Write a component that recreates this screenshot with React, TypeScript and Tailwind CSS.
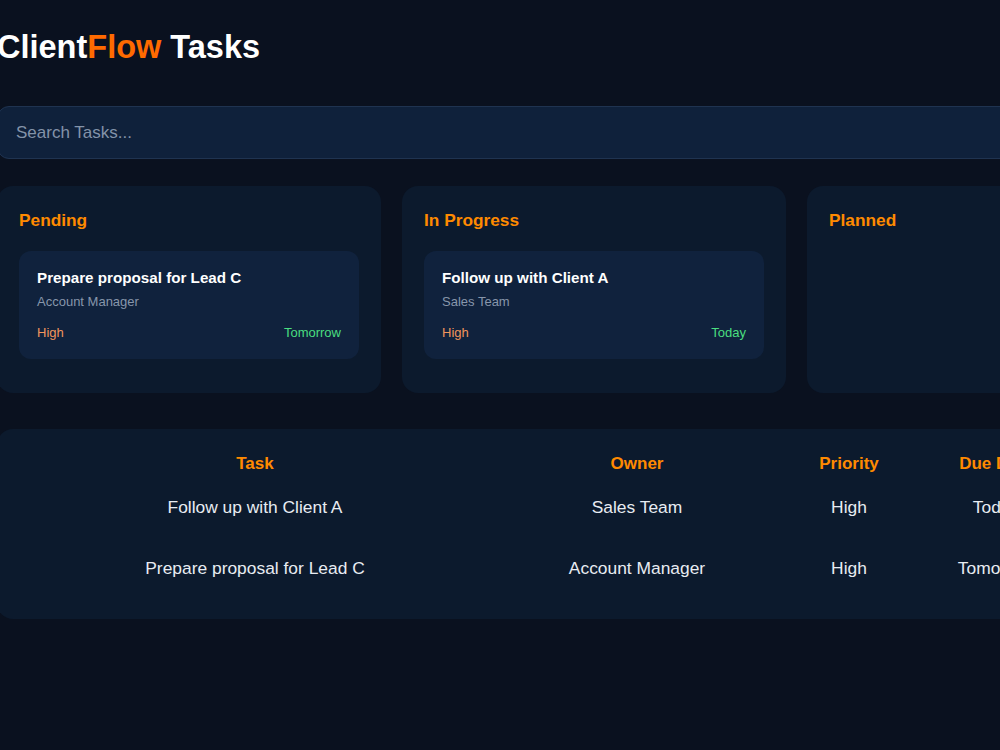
const columns = [
  {
    title: "Pending",
    tasks: [{ name: "Prepare proposal for Lead C", owner: "Account Manager", priority: "High", due: "Tomorrow" }],
  },
  {
    title: "In Progress",
    tasks: [{ name: "Follow up with Client A", owner: "Sales Team", priority: "High", due: "Today" }],
  },
  { title: "Planned", tasks: [] },
];

const rows = [
  { name: "Follow up with Client A", owner: "Sales Team", priority: "High", due: "Today" },
  { name: "Prepare proposal for Lead C", owner: "Account Manager", priority: "High", due: "Tomorrow" },
];

export default function App() {
  return (
    <div className="min-h-[750px] overflow-hidden bg-[#0a111f] font-['Liberation_Sans',Arial,sans-serif]">
      <div className="-ml-[3px] w-[1194px] pt-[29px]">
        <h1 className="text-[32.5px] font-bold leading-[37px] text-white">
          Client<span className="text-[#ff6a00]">Flow</span> Tasks
        </h1>

        <input
          placeholder="Search Tasks..."
          className="mt-[40px] block h-[53px] w-full rounded-xl border border-[#1f3350] bg-[#0f213b] px-[18px] text-[17px] text-white outline-none placeholder:text-[#8393a9]"
        />

        <div className="mt-[27px] grid grid-cols-3 gap-[21px]">
          {columns.map((col) => (
            <section key={col.title} className="h-[207px] rounded-2xl bg-[#0c1a2d] p-[22px]">
              <h3 className="text-[17.3px] font-bold leading-[24px] text-[#ff8a00]">{col.title}</h3>
              {col.tasks.map((t) => (
                <div key={t.name} className="mt-[19px] rounded-xl bg-[#10223d] p-[18px]">
                  <p className="text-[15.2px] font-bold leading-[18px] text-white">{t.name}</p>
                  <p className="mt-[7px] text-[13px] leading-[16px] text-[#8796ab]">{t.owner}</p>
                  <div className="mt-[15px] flex justify-between text-[13px] leading-[16px]">
                    <span className="text-[#f2955c]">{t.priority}</span>
                    <span className="text-[#4ade80]">{t.due}</span>
                  </div>
                </div>
              ))}
            </section>
          ))}
        </div>

        <div className="mt-[36px] rounded-2xl bg-[#0c1a2d] p-[20px] text-[17.4px]">
          <div className="grid grid-cols-[476px_288px_136px_158px] text-center">
            {["Task", "Owner", "Priority", "Due Date"].map((h) => (
              <div key={h} className="pt-[5px] pb-[3px] text-[17px] font-bold leading-[20px] text-[#ff8a00]">
                {h}
              </div>
            ))}
            {rows.map((r) => (
              <div key={r.name} className="contents text-[#e8ecf2]">
                <div className="flex h-[61px] items-center justify-center">{r.name}</div>
                <div className="flex h-[61px] items-center justify-center">{r.owner}</div>
                <div className="flex h-[61px] items-center justify-center">{r.priority}</div>
                <div className="flex h-[61px] items-center justify-center">{r.due}</div>
              </div>
            ))}
          </div>
        </div>
      </div>
    </div>
  );
}
